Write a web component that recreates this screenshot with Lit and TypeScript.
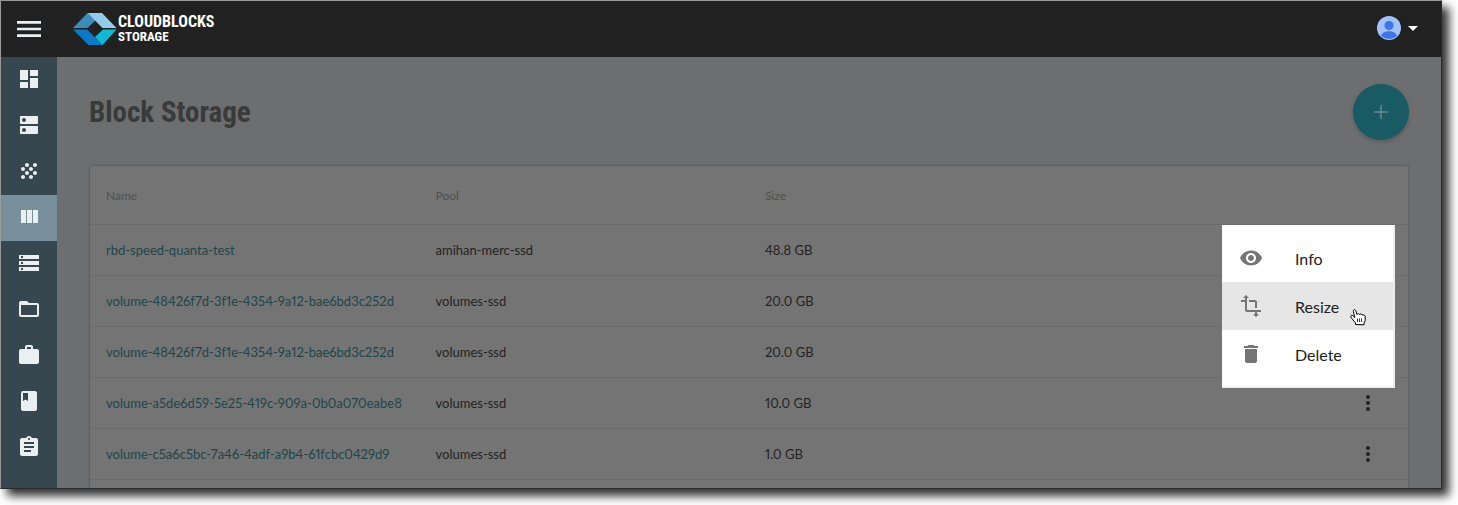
import { LitElement, html, css, svg } from "lit";
import { customElement } from "lit/decorators.js";
import { classMap } from "lit/directives/class-map.js";

const icons: Record<string, string> = {
  menu: "M3 18h18v-2H3v2zm0-5h18v-2H3v2zm0-7v2h18V6H3z",
  dashboard: "M3 13h8V3H3v10zm0 8h8v-6H3v6zm10 0h8V11h-8v10zm0-18v6h8V3h-8z",
  dns: "M20 13H4c-.55 0-1 .45-1 1v6c0 .55.45 1 1 1h16c.55 0 1-.45 1-1v-6c0-.55-.45-1-1-1zM7 19c-1.1 0-2-.9-2-2s.9-2 2-2 2 .9 2 2-.9 2-2 2zM20 3H4c-.55 0-1 .45-1 1v6c0 .55.45 1 1 1h16c.55 0 1-.45 1-1V4c0-.55-.45-1-1-1zM7 9c-1.1 0-2-.9-2-2s.9-2 2-2 2 .9 2 2-.9 2-2 2z",
  grain: "M10 12c-1.1 0-2 .9-2 2s.9 2 2 2 2-.9 2-2-.9-2-2-2zM6 8c-1.1 0-2 .9-2 2s.9 2 2 2 2-.9 2-2-.9-2-2-2zm0 8c-1.1 0-2 .9-2 2s.9 2 2 2 2-.9 2-2-.9-2-2-2zm12-8c1.1 0 2-.9 2-2s-.9-2-2-2-2 .9-2 2 .9 2 2 2zm-4 8c-1.1 0-2 .9-2 2s.9 2 2 2 2-.9 2-2-.9-2-2-2zm4-4c-1.1 0-2 .9-2 2s.9 2 2 2 2-.9 2-2-.9-2-2-2zm-4-4c-1.1 0-2 .9-2 2s.9 2 2 2 2-.9 2-2-.9-2-2-2zm-4-4c-1.1 0-2 .9-2 2s.9 2 2 2 2-.9 2-2-.9-2-2-2z",
  columns: "M10 18h5V5h-5v13zm-6 0h5V5H4v13zM16 5v13h5V5h-5z",
  storage: "M2 20h20v-4H2v4zm2-3h2v2H4v-2zM2 4v4h20V4H2zm4 3H4V5h2v2zm-4 7h20v-4H2v4zm2-3h2v2H4v-2z",
  folder: "M20 6h-8l-2-2H4c-1.1 0-1.99.9-1.99 2L2 18c0 1.1.9 2 2 2h16c1.1 0 2-.9 2-2V8c0-1.1-.9-2-2-2zm0 12H4V8h16v10z",
  work: "M20 6h-4V4c0-1.11-.89-2-2-2h-4c-1.11 0-2 .89-2 2v2H4c-1.11 0-1.99.89-1.99 2L2 19c0 1.11.89 2 2 2h16c1.11 0 2-.89 2-2V8c0-1.11-.89-2-2-2zm-6 0h-4V4h4v2z",
  book: "M18 2H6c-1.1 0-2 .9-2 2v16c0 1.1.9 2 2 2h12c1.1 0 2-.9 2-2V4c0-1.1-.9-2-2-2zM6 4h5v8l-2.5-1.5L6 12V4z",
  assignment: "M19 3h-4.18C14.4 1.84 13.3 1 12 1c-1.3 0-2.4.84-2.82 2H5c-1.1 0-2 .9-2 2v14c0 1.1.9 2 2 2h14c1.1 0 2-.9 2-2V5c0-1.1-.9-2-2-2zm-7 0c.55 0 1 .45 1 1s-.45 1-1 1-1-.45-1-1 .45-1 1-1zm2 14H7v-2h7v2zm3-4H7v-2h10v2zm0-4H7V7h10v2z",
  eye: "M12 4.5C7 4.5 2.73 7.61 1 12c1.73 4.39 6 7.5 11 7.5s9.27-3.11 11-7.5c-1.73-4.39-6-7.5-11-7.5zM12 17c-2.76 0-5-2.24-5-5s2.24-5 5-5 5 2.24 5 5-2.24 5-5 5zm0-8c-1.66 0-3 1.34-3 3s1.34 3 3 3 3-1.34 3-3-1.34-3-3-3z",
  transform: "M22 18v-2H8V4h2L7 1 4 4h2v2H2v2h4v8c0 1.1.9 2 2 2h8v2h-2l3 3 3-3h-2v-2h4zM10 8h6v6h2V8c0-1.1-.9-2-2-2h-6v2z",
  trash: "M6 19c0 1.1.9 2 2 2h8c1.1 0 2-.9 2-2V7H6v12zM19 4h-3.5l-1-1h-5l-1 1H5v2h14V4z",
  more: "M12 8c1.1 0 2-.9 2-2s-.9-2-2-2-2 .9-2 2 .9 2 2 2zm0 2c-1.1 0-2 .9-2 2s.9 2 2 2 2-.9 2-2-.9-2-2-2zm0 6c-1.1 0-2 .9-2 2s.9 2 2 2 2-.9 2-2-.9-2-2-2z",
  caret: "M7 10l5 5 5-5z",
};

const icon = (name: string) =>
  html`<svg class="icon" viewBox="0 0 24 24" aria-hidden="true">${svg`<path d=${icons[name]}></path>`}</svg>`;

const nav = [
  ["dashboard", "Dashboard"],
  ["dns", "Servers"],
  ["grain", "Pools"],
  ["columns", "Block Storage"],
  ["storage", "Disks"],
  ["folder", "Files"],
  ["work", "Jobs"],
  ["book", "Docs"],
  ["assignment", "Reports"],
];

const volumes = [
  ["rbd-speed-quanta-test", "amihan-merc-ssd", "48.8 GB"],
  ["volume-48426f7d-3f1e-4354-9a12-bae6bd3c252d", "volumes-ssd", "20.0 GB"],
  ["volume-48426f7d-3f1e-4354-9a12-bae6bd3c252d", "volumes-ssd", "20.0 GB"],
  ["volume-a5de6d59-5e25-419c-909a-0b0a070eabe8", "volumes-ssd", "10.0 GB"],
  ["volume-c5a6c5bc-7a46-4adf-a9b4-61fcbc0429d9", "volumes-ssd", "1.0 GB"],
];

@customElement("app-root")
export class AppRoot extends LitElement {
  static styles = css`
    :host {
      display: block;
      box-sizing: border-box;
      height: 100vh;
      padding: 0 16px 16px 0;
      overflow: hidden;
      background: #fff;
      font-family: Lato, sans-serif;
      font-size: 13px;
      font-variant-numeric: proportional-nums;
      color: #232323;
    }
    * { box-sizing: border-box; }
    button {
      margin: 0;
      padding: 0;
      border: 0;
      background: none;
      color: inherit;
      font: inherit;
      display: flex;
      align-items: center;
      justify-content: center;
    }
    a { color: inherit; text-decoration: none; }
    .icon { display: block; width: 24px; height: 24px; fill: currentColor; }
    .window {
      height: 100%;
      display: flex;
      flex-direction: column;
      border: 1px solid #999;
      border-right-color: #2a2a2a;
      border-bottom-color: #2a2a2a;
      box-shadow: 7px 7px 9px rgba(0, 0, 0, 0.8);
    }
    .topbar {
      flex: none;
      height: 56px;
      display: flex;
      align-items: center;
      background: #212121;
      color: #fff;
    }
    .burger { width: 56px; height: 56px; color: #eceff1; }
    .burger .icon { width: 32px; height: 32px; }
    .brand { display: flex; align-items: center; gap: 1px; margin-left: 16px; }
    .mark { display: block; width: 44px; height: 34px; }
    .wordmark {
      display: flex;
      flex-direction: column;
      font-family: "Roboto Condensed", Roboto, sans-serif;
      font-weight: 700;
      font-size: 16px;
      line-height: 15px;
    }
    .wordmark small { font-size: 13px; }
    .account { margin-left: auto; margin-right: 16px; padding-bottom: 2px; }
    .avatar { display: block; width: 24px; height: 24px; }
    .body { flex: 1; min-height: 0; display: flex; }
    .side {
      flex: none;
      width: 56px;
      background: #37474f;
      color: #eceff1;
    }
    .side a { display: flex; height: 46px; padding-bottom: 2px; align-items: center; justify-content: center; }
    .side a.active { background: #78909c; }
    .main {
      flex: 1;
      min-width: 0;
      overflow: hidden;
      padding: 27px 32px 0;
      background: #6d6e70;
    }
    .head { display: flex; align-items: center; justify-content: space-between; height: 56px; }
    h1 {
      margin: 0;
      font-family: "Roboto Condensed", Roboto, sans-serif;
      font-size: 29px;
      line-height: 36px;
      font-weight: 700;
      color: #3a3a3a;
    }
    .add {
      width: 56px;
      height: 56px;
      border-radius: 50%;
      background: #195b64;
      color: #999;
      box-shadow: 0 2px 4px rgba(0, 0, 0, 0.2);
    }
    .plus { width: 14px; height: 14px; stroke: currentColor; stroke-width: 1; }
    .card {
      position: relative;
      margin: 26px 1px 0;
      background: #747474;
      box-shadow: 0 0 2px rgba(0, 0, 0, 0.35);
    }
    table { width: 100%; border-collapse: collapse; table-layout: fixed; }
    th, td { padding: 0 16px; text-align: left; font-weight: 400; border-bottom: 1px solid #6c6c6c; }
    th { height: 58px; padding-top: 2px; font-size: 12px; color: #505050; }
    td { height: 51px; }
    tr.rest td { height: 60px; }
    td a { color: #1d464b; }
    .actions { padding: 0 28px; }
    .actions button { margin-left: auto; width: 24px; height: 24px; }
    .menu {
      position: absolute;
      top: 59px;
      right: 13px;
      width: 173px;
      padding: 9px 0 8px;
      background: #fff;
      color: #212121;
      font-size: 16px;
      border-right: 2px solid #eceeee;
      border-bottom: 2px solid #eee;
    }
    .menu button { width: 100%; height: 48px; justify-content: flex-start; gap: 32px; padding: 0 17px; }
    .menu button.hover { background: #e6e6e6; }
    .menu .icon { color: #757575; }
    .cursor { position: absolute; left: 128px; top: 83px; width: 16px; height: 19px; }
  `;

  render() {
    return html`
      <div class="window">
        <header class="topbar">
          <button class="burger" aria-label="Menu">${icon("menu")}</button>
          <a class="brand" href="#">
            <svg class="mark" viewBox="0 0 44 34" aria-hidden="true">
              <path d="M0 16 14.500 1 22.500 8.500 14.500 16z" fill="#3c8cb8"></path>
              <path d="M14.500 1H29L43.500 16H29.500z" fill="#94cbea"></path>
              <path d="M0 17.500H14L30 33H15.500z" fill="#0a7ac6"></path>
              <path d="M30 17.500H43.500L29.500 33 22 25z" fill="#0db9d4"></path>
            </svg>
            <span class="wordmark"><span>CLOUDBLOCKS</span><small>STORAGE</small></span>
          </a>
          <button class="account" aria-label="Account">
            <svg class="avatar" viewBox="0 0 24 24" aria-hidden="true">
              <circle cx="12" cy="12" r="12" fill="#a0c3ff"></circle>
              <circle cx="12" cy="9.500" r="4.600" fill="#3f74e8"></circle>
              <path d="M4 20C4.500 17 8 15.300 12 15.300s7.500 1.700 8 4.700a12 12 0 0 1-16 0z" fill="#3f74e8"></path>
            </svg>
            ${icon("caret")}
          </button>
        </header>
        <div class="body">
          <nav class="side">
            ${nav.map(
              ([name, label]) =>
                html`<a href="#" aria-label=${label} class=${classMap({ active: name === "columns" })}>${icon(name)}</a>`
            )}
          </nav>
          <main class="main">
            <div class="head">
              <h1>Block Storage</h1>
              <button class="add" aria-label="Add volume">
                <svg class="plus" viewBox="0 0 14 14"><path d="M7 0V14M0 7H14"></path></svg>
              </button>
            </div>
            <section class="card">
              <table>
                <thead>
                  <tr><th>Name</th><th>Pool</th><th>Size</th><th></th></tr>
                </thead>
                <tbody>
                  ${volumes.map(
                    ([name, pool, size]) => html`<tr>
                      <td><a href="#">${name}</a></td>
                      <td>${pool}</td>
                      <td>${size}</td>
                      <td class="actions"><button aria-label="Actions">${icon("more")}</button></td>
                    </tr>`
                  )}
                  <tr class="rest"><td colspan="4"></td></tr>
                </tbody>
              </table>
              <div class="menu" role="menu">
                <button role="menuitem">${icon("eye")}Info</button>
                <button role="menuitem" class="hover">${icon("transform")}Resize</button>
                <button role="menuitem">${icon("trash")}Delete</button>
                <svg class="cursor" viewBox="0 0 16 19" aria-hidden="true">
                  <path
                    d="M5.500 16.500V15L3 12 .8 9C.3 7.500 1.800 6.800 3 7.800L4.800 9.500 3.400 3.500C3 1.500 5 .8 5.700 2.500L7 6.500C7.500 5.300 9 5.300 9.500 6.500 10.200 5.600 11.700 5.800 12 7 13 6.500 15 7 15.200 8.500V12.500L14 15V16.800z"
                    fill="#fff"
                    stroke="#000"
                    stroke-linejoin="round"
                  ></path>
                  <path d="M7.500 10.500V14M9.500 10.500V14M11.500 10.500V14" stroke="#000" stroke-width="0.8"></path>
                </svg>
              </div>
            </section>
          </main>
        </div>
      </div>
    `;
  }
}
